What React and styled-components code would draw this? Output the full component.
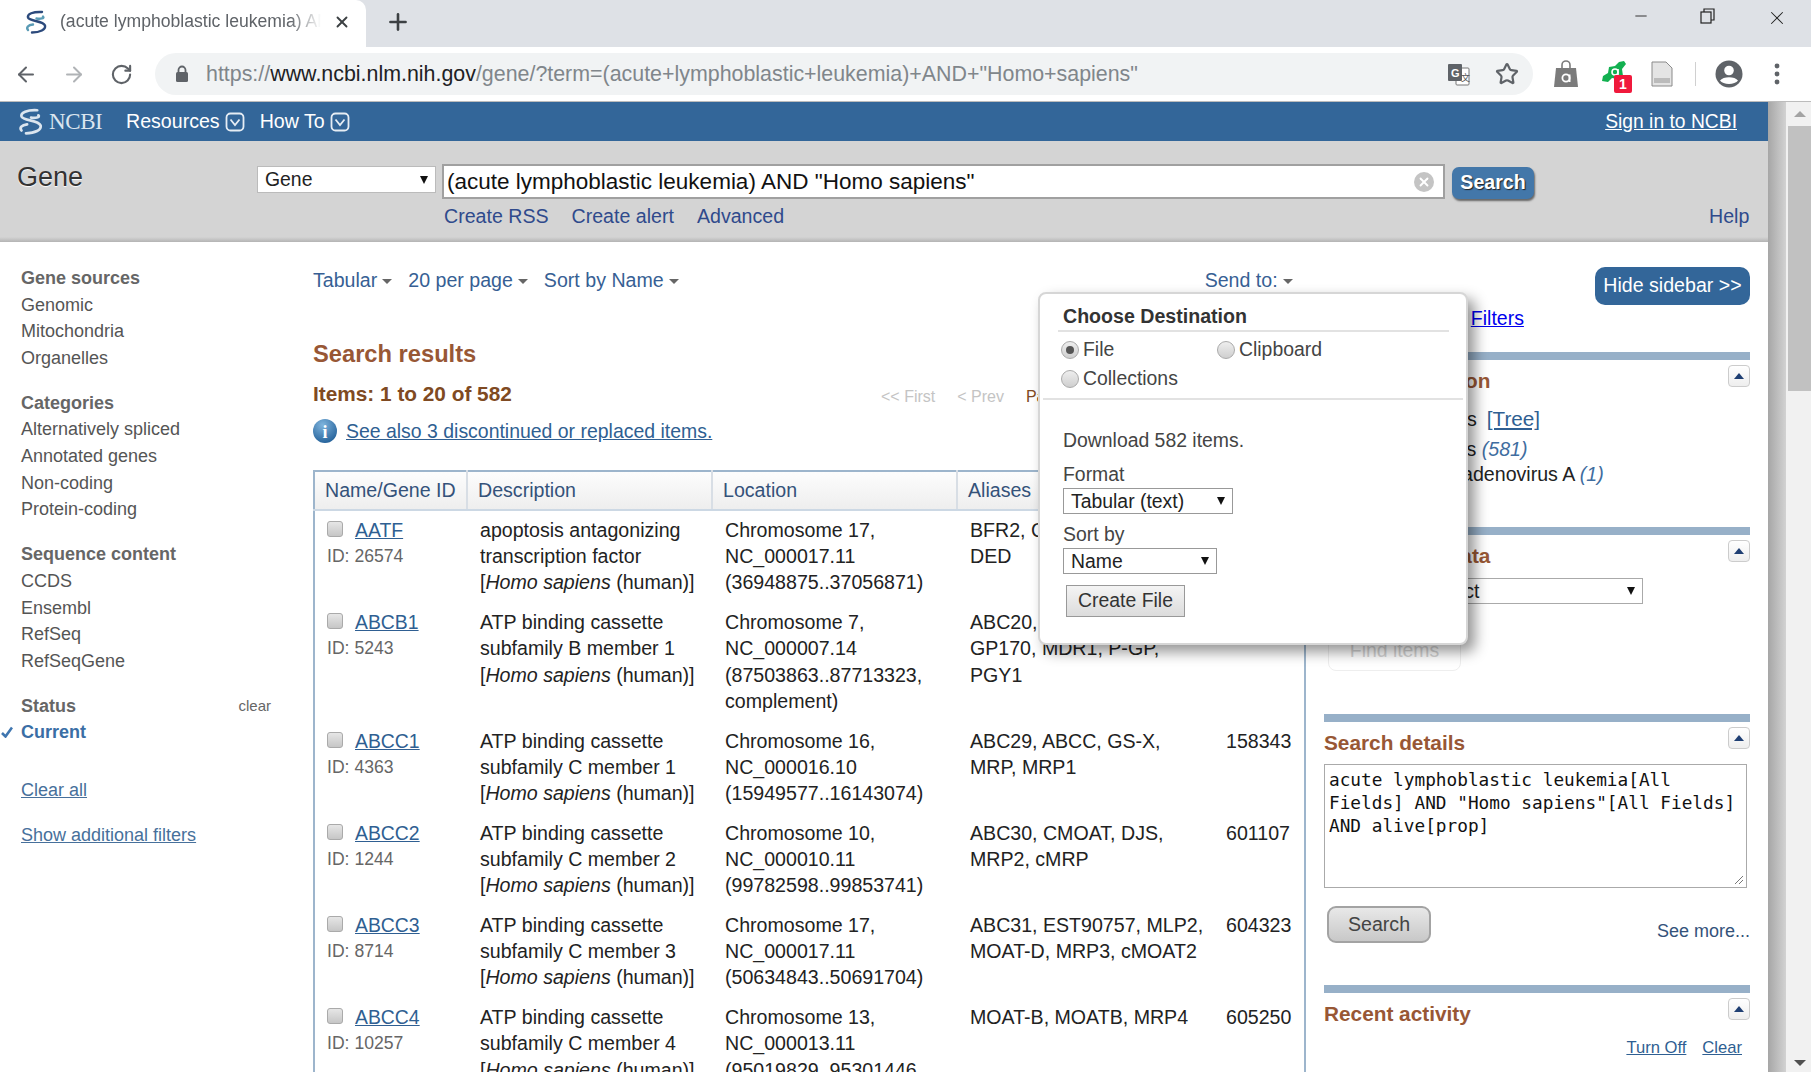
import React from 'react'
import styled, { createGlobalStyle } from 'styled-components'
import { ArrowLeft, ArrowRight, RotateCw, Star, Plus, X, Minus } from 'lucide-react'

const GlobalStyle = createGlobalStyle`
  html, body { margin: 0; padding: 0; height: 100%; overflow: hidden; }
  body { font-family: "Liberation Sans", Arial, sans-serif; color: #333; }
  a { color: inherit; }
`

const Root = styled.div`
  display: flex;
  flex-direction: column;
  width: 1811px;
  height: 1072px;
  overflow: hidden;
  background: #fff;
`

/* browser chrome */
const TabStrip = styled.div`
  display: flex;
  align-items: stretch;
  height: 47px;
  background: #dee1e6;
  flex: none;
`
const Tab = styled.div`
  display: flex;
  align-items: center;
  width: 366px;
  padding: 0 15px 4px 24px;
  box-sizing: border-box;
  background: #fff;
  border-radius: 0 10px 0 0;
  gap: 12px;
`
const TabTitle = styled.div`
  flex: 1;
  font-size: 17.6px;
  color: #5f6368;
  white-space: nowrap;
  overflow: hidden;
  -webkit-mask-image: linear-gradient(90deg, #000 88%, transparent);
  mask-image: linear-gradient(90deg, #000 88%, transparent);
`
const NewTab = styled.div`
  display: flex;
  align-items: center;
  margin-left: 19px;
  padding-bottom: 4px;
  color: #3c4043;
`
const WindowControls = styled.div`
  display: flex;
  align-items: flex-start;
  margin-left: auto;
  padding: 7px 23px 0 0;
  gap: 49px;
  color: #222;
`
const Toolbar = styled.div`
  display: flex;
  align-items: center;
  height: 55px;
  flex: none;
  box-sizing: border-box;
  border-bottom: 1px solid #bcbcbc;
  padding-left: 14px;
  background: #fff;
`
const NavButton = styled.div`
  display: flex;
  width: 24px;
  margin-right: 24px;
  color: ${(props) => props.color || '#5f6368'};
`
const Omnibox = styled.div`
  display: flex;
  align-items: center;
  width: 1378px;
  height: 42px;
  margin-left: -3px;
  box-sizing: border-box;
  padding: 0 14px 0 20px;
  border-radius: 21px;
  background: #f1f3f4;
`
const UrlText = styled.div`
  margin-left: 17px;
  padding-top: 1px;
  font-size: 21.4px;
  color: #80868b;
  white-space: nowrap;
  b { font-weight: normal; color: #202124; }
`
const OmniIcons = styled.div`
  display: flex;
  align-items: center;
  margin-left: auto;
  gap: 24px;
  color: #5f6368;
`
const ExtIcons = styled.div`
  display: flex;
  align-items: center;
  margin-left: 9px;
  color: #5f6368;
`
const ExtSlot = styled.div`
  position: relative;
  display: flex;
  justify-content: center;
  width: 48px;
`
const ExtBadge = styled.span`
  position: absolute;
  left: 24px;
  top: 15px;
  width: 18px;
  height: 18px;
  border-radius: 2px;
  background: #f0193c;
  color: #fff;
  font-size: 14px;
  font-weight: bold;
  line-height: 18px;
  text-align: center;
`
const ToolSep = styled.div`
  width: 1px;
  height: 24px;
  margin: 0 9px;
  background: #d0d0d0;
`

/* viewport */
const Viewport = styled.div`
  flex: 1;
  display: flex;
  min-height: 0;
`
const PageFrame = styled.div`
  position: relative;
  width: 1768px;
  flex: none;
  overflow: hidden;
`
const FrameShadow = styled.div`
  width: 18px;
  flex: none;
  background: linear-gradient(90deg, #a6a6a6, #d2d2d2);
`
const Scrollbar = styled.div`
  flex: 1;
  display: flex;
  flex-direction: column;
  align-items: center;
  background: #f1f1f1;
  padding-left: 2px;
`
const ScrollThumb = styled.div`
  width: 100%;
  height: 265px;
  background: #c1c1c1;
`
const ScrollArrow = styled.div`
  width: 0;
  height: 0;
  margin: ${(props) => (props.down ? 'auto 0 6px' : '9px 0')};
  border-left: 6px solid transparent;
  border-right: 6px solid transparent;
  ${(props) => (props.down ? 'border-top: 6px solid #505050;' : 'border-bottom: 6px solid #a3a3a3;')}
`

/* NCBI header */
const NcbiBar = styled.div`
  display: flex;
  align-items: center;
  height: 39px;
  background: #336699;
  padding: 0 31px 0 17px;
  color: #fff;
`
const NcbiLogo = styled.div`
  display: flex;
  align-items: center;
  gap: 5px;
  width: 109px;
  font-family: "Liberation Serif", serif;
  font-size: 23px;
  letter-spacing: -0.4px;
  color: #dbe5ef;
`
const NavItem = styled.div`
  display: flex;
  align-items: center;
  gap: 5px;
  margin-right: 15px;
  font-size: 19.6px;
`
const NavChevron = styled.svg`
  width: 20px;
  height: 20px;
`
const SignIn = styled.a`
  margin-left: auto;
  font-size: 19.3px;
  text-decoration: underline;
  color: #fff;
`
const SearchBand = styled.div`
  display: grid;
  grid-template-columns: 257px 179px 1100px 1fr;
  grid-template-rows: 58px 1fr;
  height: 101px;
  box-sizing: border-box;
  background: linear-gradient(180deg, #d4d4d4 95%, #b4b4b4);
`
const DbTitle = styled.div`
  padding: 21px 0 0 17px;
  font-size: 27px;
  color: #333;
  text-shadow: 0 1px 1px #fff;
`
const FakeSelect = styled.div`
  display: flex;
  align-items: center;
  justify-content: space-between;
  box-sizing: border-box;
  width: ${(props) => props.w}px;
  height: ${(props) => props.h || 26}px;
  margin-top: ${(props) => props.mt || 0}px;
  padding: 0 7px;
  background: #fff;
  border: 1px solid ${(props) => props.bd || '#a9a9a9'};
  font-size: 19.4px;
  color: #222;
`
const SelectArrow = styled.span`
  width: 0;
  height: 0;
  border-left: 4px solid transparent;
  border-right: 4px solid transparent;
  border-top: 8px solid #111;
`
const DbSelectCell = styled.div`
  padding-top: 25px;
`
const TermCell = styled.div`
  display: flex;
  align-items: flex-start;
  padding: 23px 0 0 6px;
  gap: 7px;
`
const TermInput = styled.div`
  display: flex;
  align-items: center;
  justify-content: space-between;
  box-sizing: border-box;
  width: 1003px;
  height: 35px;
  padding: 0 9px 0 3px;
  background: #fff;
  border: 2px solid #a0a0a0;
  font-size: 22.5px;
  color: #111;
`
const ClearDot = styled.span`
  display: flex;
  align-items: center;
  justify-content: center;
  width: 20px;
  height: 20px;
  border-radius: 50%;
  background: #c4c4c4;
  color: #fff;
`
const GoButton = styled.div`
  width: 82px;
  height: 32px;
  margin-top: 3px;
  border-radius: 7px;
  background: #4377a9;
  box-shadow: 1px 2px 2px #666;
  color: #fff;
  font-size: 19.6px;
  font-weight: bold;
  line-height: 31px;
  text-align: center;
  text-shadow: 1px 1px 1px #222;
`
const BandLinks = styled.div`
  grid-column: 3;
  display: flex;
  gap: 23px;
  padding: 6px 0 0 8px;
  font-size: 19.6px;
  color: #2f4a8c;
`
const HelpLink = styled.div`
  grid-column: 4;
  padding: 6px 0 0 173px;
  font-size: 19.6px;
  color: #2f4a8c;
`

/* page body */
const Columns = styled.div`
  display: flex;
  align-items: flex-start;
  height: 830px;
`
const Facets = styled.div`
  width: 313px;
  flex: none;
  box-sizing: border-box;
  padding: 23px 0 0 21px;
  font-size: 18px;
  line-height: 26.6px;
  color: #555;
`
const FacetGroup = styled.div`
  margin-bottom: ${(props) => props.mb || 18.5}px;
`
const FacetHead = styled.div`
  display: flex;
  justify-content: space-between;
  width: 250px;
  font-weight: bold;
  font-size: 18px;
  color: #666;
  small { font-weight: normal; font-size: 15px; color: #666; }
`
const FacetItem = styled.div`
  position: relative;
  color: ${(props) => (props.active ? '#3a6ea5' : '#555')};
  font-weight: ${(props) => (props.active ? 'bold' : 'normal')};
`
const FacetCheck = styled.svg`
  position: absolute;
  left: -20px;
  top: 7px;
`
const FacetLink = styled.a`
  display: block;
  margin-bottom: ${(props) => props.mb || 0}px;
  text-decoration: underline;
  color: #47709b;
`
const Results = styled.div`
  width: 993px;
  flex: none;
`
const ViewBar = styled.div`
  display: flex;
  align-items: center;
  gap: 16px;
  height: 32px;
  margin-top: 22px;
  font-size: 19.6px;
  color: #375f94;
`
const Drop = styled.span`
  display: inline-flex;
  align-items: center;
  gap: 5px;
  margin-left: ${(props) => props.ml || 0}px;
  &::after {
    content: '';
    margin-top: 3px;
    border-left: 5px solid transparent;
    border-right: 5px solid transparent;
    border-top: 5px solid #666;
  }
`
const ResultsTitle = styled.h2`
  margin: 43px 0 0;
  font-size: 23.7px;
  line-height: 30px;
  color: #985735;
`
const ItemsRow = styled.div`
  display: flex;
  align-items: center;
  height: 30px;
  margin-top: 10px;
`
const ItemsCount = styled.div`
  width: 568px;
  font-size: 20.8px;
  font-weight: bold;
  color: #7f4a22;
`
const Pager = styled.div`
  display: flex;
  gap: 22px;
  margin-top: 6px;
  font-size: 16px;
  color: #c4c4c4;
  span:last-child { color: #7f4a22; }
`
const NoticeRow = styled.div`
  display: flex;
  align-items: center;
  gap: 9px;
  height: 28px;
  margin-top: 8px;
  font-size: 19.45px;
  color: #2f5f92;
  a { text-decoration: underline; }
`
const ResultTable = styled.table`
  width: 993px;
  margin-top: 25px;
  table-layout: fixed;
  border-collapse: collapse;
  border: 2px solid #9db5cc;
  border-bottom: 0;
  font-size: 19.6px;
  line-height: 26.2px;
  color: #222;
  th {
    height: 37px;
    padding: 0 0 0 10px;
    text-align: left;
    font-weight: normal;
    color: #34527a;
    background: linear-gradient(180deg, #fdfdfd, #eeeeee);
    border-right: 2px solid #d8dee5;
    border-bottom: 2px solid #ccd8e4;
    white-space: nowrap;
  }
  td {
    padding: 6px 0 7.6px 13px;
    vertical-align: top;
    white-space: nowrap;
  }
  td:first-child { padding-left: 12px; }
`
const NameCell = styled.div`
  display: flex;
  align-items: center;
  gap: 12px;
  font-size: 19.4px;
  a { color: #2f5f92; text-decoration: underline; }
`
const RowCheck = styled.span`
  width: 16px;
  height: 16px;
  box-sizing: border-box;
  border: 1px solid #aaa;
  border-radius: 3px;
  margin-top: -2px;
  background: linear-gradient(180deg, #e6e6e6, #c6c6c6);
`
const GeneId = styled.div`
  font-size: 17.6px;
  color: #666;
`
const Sidebar = styled.div`
  width: 426px;
  flex: none;
  margin-left: 18px;
`
const HideRow = styled.div`
  display: flex;
  justify-content: flex-end;
  padding-top: 25px;
`
const HideButton = styled.div`
  width: 155px;
  height: 38px;
  border-radius: 10px;
  background: #336699;
  color: #fff;
  font-size: 19.6px;
  line-height: 37px;
  text-align: center;
`
const FiltersRow = styled.div`
  height: 47px;
  padding: 0 0 0 7px;
  font-size: 19.5px;
  line-height: 26px;
  margin-top: 0;
  a { color: #0000ee; text-decoration: underline; }
`
const Section = styled.section`
  position: relative;
  height: ${(props) => props.h}px;
  box-sizing: border-box;
  border-top: 8px solid #97b0c8;
  padding-top: 8px;
`
const SectionTitle = styled.h3`
  margin: 0;
  font-size: 20.8px;
  line-height: 26px;
  color: #985735;
`
const ToggleButton = styled.span`
  position: absolute;
  right: 0;
  top: 5px;
  display: flex;
  align-items: center;
  justify-content: center;
  width: 22px;
  height: 22px;
  box-sizing: border-box;
  border: 1px solid #ccc;
  border-radius: 4px;
  background: linear-gradient(180deg, #fff, #eee);
  &::after {
    content: '';
    border-left: 5px solid transparent;
    border-right: 5px solid transparent;
    border-bottom: 6px solid #1f3f73;
  }
`
const TaxonList = styled.div`
  margin: 12px 0 0 27px;
  font-size: 19.6px;
  line-height: 25px;
  color: #222;
  a { font-size: 20.7px; color: #2f5f92; text-decoration: underline; margin-left: 10px; }
  i { color: #3f6da0; }
`
const TaxonRow = styled.div`
  margin-left: ${(props) => props.ml || 0}px;
  margin-bottom: ${(props) => props.mb || 0}px;
`
const DbRow = styled.div`
  display: flex;
  align-items: center;
  gap: 5px;
  margin-top: 9px;
  font-size: 19.4px;
`
const FindItems = styled.div`
  width: 131px;
  height: 38px;
  margin: 27px 0 0 4px;
  border: 1px solid #eee;
  border-radius: 8px;
  color: #d4d4d4;
  font-size: 19.4px;
  line-height: 36px;
  text-align: center;
`
const DetailsBox = styled.div`
  position: relative;
  width: 423px;
  height: 124px;
  margin-top: 8px;
  box-sizing: border-box;
  border: 1px solid #aaa;
  padding: 4px 4px;
  font-family: "DejaVu Sans Mono", monospace;
  font-size: 17.75px;
  line-height: 23px;
  color: #111;
  white-space: pre;
`
const ResizeGrip = styled.svg`
  position: absolute;
  right: 2px;
  bottom: 2px;
`
const DetailsFoot = styled.div`
  display: flex;
  justify-content: space-between;
  margin-top: 18px;
  padding-left: 3px;
`
const GrayButton = styled.div`
  width: 104px;
  height: 37px;
  box-sizing: border-box;
  border: 2px solid #a3a3a3;
  border-radius: 9px;
  background: linear-gradient(180deg, #e8e8e8, #c8c8c8);
  color: #444;
  font-size: 19.6px;
  line-height: 32px;
  text-align: center;
`
const SeeMore = styled.div`
  padding-top: 15px;
  font-size: 18px;
  color: #34527a;
`
const RecentLinks = styled.div`
  display: flex;
  justify-content: flex-end;
  gap: 16px;
  margin-top: 11px;
  padding-right: 8px;
  font-size: 16.6px;
  color: #2f5f92;
  a { text-decoration: underline; }
`

/* send to popup */
const Popup = styled.div`
  position: absolute;
  left: 1038px;
  top: 190px;
  width: 430px;
  height: 353px;
  box-sizing: border-box;
  padding: 10px 20px 0 23px;
  background: #fff;
  border: 2px solid #d6d6d6;
  border-radius: 8px;
  box-shadow: 7px 7px 14px rgba(0, 0, 0, 0.42);
  font-size: 19.4px;
  color: #444;
`
const PopupTitle = styled.div`
  margin: 0 -3px 0 -5px;
  border-bottom: 2px solid #e2e2e2;
  height: 26px;
  padding-left: 5px;
  font-weight: bold;
  font-size: 19.6px;
  line-height: 24px;
  color: #333;
`
const RadioGrid = styled.div`
  display: grid;
  grid-template-columns: 156px 1fr;
  grid-auto-rows: 29px;
  align-items: center;
  margin: 3px 0 0 -2px;
`
const RadioLabel = styled.label`
  display: flex;
  align-items: center;
  gap: 4px;
`
const RadioDot = styled.span`
  display: flex;
  align-items: center;
  justify-content: center;
  width: 18px;
  height: 18px;
  box-sizing: border-box;
  border: 1px solid #aaa;
  border-radius: 50%;
  background: linear-gradient(180deg, #eee, #cfcfcf);
  &::after {
    content: '';
    display: ${(props) => (props.on ? 'block' : 'none')};
    width: 8px;
    height: 8px;
    border-radius: 50%;
    background: #555;
  }
`
const PopupRule = styled.div`
  height: 2px;
  margin: 5px -17px 0 -20px;
  background: #e2e2e2;
`
const PopupText = styled.div`
  margin-top: ${(props) => props.mt || 0}px;
  line-height: 26px;
`
const CreateButton = styled.div`
  width: 119px;
  height: 32px;
  margin: 11px 0 0 3px;
  box-sizing: border-box;
  border: 1px solid #999;
  background: linear-gradient(180deg, #f4f4f4, #dcdcdc);
  color: #333;
  font-size: 19.4px;
  line-height: 29px;
  text-align: center;
`

const Helix = ({ size = 24, color = '#dbe5ef', accent = '#dbe5ef' }) => (
  <svg width={size} height={size} viewBox="0 0 24 24" fill="none" strokeLinecap="round" strokeWidth="2.4">
    <path d="M18 2 C9 1.5 3 4 4 7.5 C5.5 11.5 19 10.5 21 15.5 C22 19.5 16 22.5 8 22.5" stroke={color} />
    <path d="M19 6.5 C21 8.5 16 9 12.5 8.5" stroke={accent} />
    <path d="M9 14.5 C4 15 2 17.5 4 20" stroke={accent} />
  </svg>
)

const MenuChevron = () => (
  <NavChevron viewBox="0 0 20 20" fill="none" stroke="#e6edf4" strokeWidth="1.8">
    <rect x="1.5" y="1.5" width="17" height="17" rx="4" />
    <path d="M5.5 7.5 L10 13 L14.5 7.5" />
  </NavChevron>
)

const genes = [
  { name: 'AATF', id: '26574', desc: ['apoptosis antagonizing', 'transcription factor'], loc: ['Chromosome 17,', 'NC_000017.11', '(36948875..37056871)'], alias: ['BFR2, CHE1, DED,', 'DED'], mim: '608463' },
  { name: 'ABCB1', id: '5243', desc: ['ATP binding cassette', 'subfamily B member 1'], loc: ['Chromosome 7,', 'NC_000007.14', '(87503863..87713323,', 'complement)'], alias: ['ABC20, CD243, CLCS,', 'GP170, MDR1, P-GP,', 'PGY1'], mim: '171050' },
  { name: 'ABCC1', id: '4363', desc: ['ATP binding cassette', 'subfamily C member 1'], loc: ['Chromosome 16,', 'NC_000016.10', '(15949577..16143074)'], alias: ['ABC29, ABCC, GS-X,', 'MRP, MRP1'], mim: '158343' },
  { name: 'ABCC2', id: '1244', desc: ['ATP binding cassette', 'subfamily C member 2'], loc: ['Chromosome 10,', 'NC_000010.11', '(99782598..99853741)'], alias: ['ABC30, CMOAT, DJS,', 'MRP2, cMRP'], mim: '601107' },
  { name: 'ABCC3', id: '8714', desc: ['ATP binding cassette', 'subfamily C member 3'], loc: ['Chromosome 17,', 'NC_000017.11', '(50634843..50691704)'], alias: ['ABC31, EST90757, MLP2,', 'MOAT-D, MRP3, cMOAT2'], mim: '604323' },
  { name: 'ABCC4', id: '10257', desc: ['ATP binding cassette', 'subfamily C member 4'], loc: ['Chromosome 13,', 'NC_000013.11', '(95019829..95301446,', 'complement)'], alias: ['MOAT-B, MOATB, MRP4'], mim: '605250' },
]

const facets = [
  { head: 'Gene sources', items: ['Genomic', 'Mitochondria', 'Organelles'] },
  { head: 'Categories', items: ['Alternatively spliced', 'Annotated genes', 'Non-coding', 'Protein-coding'] },
  { head: 'Sequence content', items: ['CCDS', 'Ensembl', 'RefSeq', 'RefSeqGene'] },
]

const Lines = ({ items }) => items.map((line) => <div key={line}>{line}</div>)

const App = () => (
  <Root>
    <GlobalStyle />
    <TabStrip>
      <Tab>
        <Helix size={24} color="#2c4a7c" accent="#5a9bb5" />
        <TabTitle>(acute lymphoblastic leukemia) AND "Homo sapiens"</TabTitle>
        <X size={18} color="#3c4043" strokeWidth={2.5} />
      </Tab>
      <NewTab><Plus size={26} strokeWidth={2.4} /></NewTab>
      <WindowControls>
        <Minus size={18} strokeWidth={1.2} />
        <svg width="18" height="18" viewBox="0 0 18 18" fill="none" stroke="#222" strokeWidth="1.2">
          <rect x="2" y="5" width="10" height="11" />
          <path d="M5 5 V2 H15 V13 H12" />
        </svg>
        <X size={22} strokeWidth={1.1} />
      </WindowControls>
    </TabStrip>
    <Toolbar>
      <NavButton><ArrowLeft size={25} strokeWidth={2} /></NavButton>
      <NavButton color="#b0b3b6"><ArrowRight size={25} strokeWidth={2} /></NavButton>
      <NavButton><RotateCw size={23} strokeWidth={2.2} /></NavButton>
      <Omnibox>
        <svg width="14" height="18" viewBox="0 0 14 18" fill="#5f6368">
          <rect x="1" y="7" width="12" height="10" rx="1.5" />
          <path d="M3.5 7 V5 a3.5 3.5 0 0 1 7 0 V7" fill="none" stroke="#5f6368" strokeWidth="1.8" />
        </svg>
        <UrlText>https://<b>www.ncbi.nlm.nih.gov</b>/gene/?term=(acute+lymphoblastic+leukemia)+AND+"Homo+sapiens"</UrlText>
        <OmniIcons>
          <svg width="24" height="24" viewBox="0 0 24 24">
            <rect x="9" y="6" width="13" height="17" rx="1" fill="#fff" stroke="#777" />
            <rect x="1" y="2" width="14" height="17" rx="1" fill="#5f6368" />
            <text x="4" y="15" fontSize="11" fontWeight="bold" fill="#fff" fontFamily="Liberation Sans">G</text>
            <text x="14" y="19" fontSize="9" fill="#555" fontFamily="Noto Sans CJK SC">文</text>
          </svg>
          <Star size={24} strokeWidth={2.2} />
        </OmniIcons>
      </Omnibox>
      <ExtIcons>
        <ExtSlot>
          <svg width="26" height="28" viewBox="0 0 26 28" fill="#7b7b7b">
            <path d="M3 8 H23 L25 27 H1 Z" />
            <path d="M9 8 V5 a4 4 0 0 1 8 0 V8" fill="none" stroke="#7b7b7b" strokeWidth="1.6" />
            <circle cx="13" cy="18" r="3.6" fill="none" stroke="#fff" strokeWidth="1.8" />
            <path d="M16.6 14.5 V22" stroke="#fff" strokeWidth="1.8" />
          </svg>
        </ExtSlot>
        <ExtSlot>
          <svg width="26" height="28" viewBox="0 0 26 28" fill="#12b050">
            <path d="M18 2 L23 1 L25 4 L21 9 L22 16 L17 19 L11 18 L7 22 L1 21 L2 16 L7 13 L8 7 L14 6 Z" />
            <circle cx="14" cy="12" r="3" fill="none" stroke="#fff" strokeWidth="1.6" />
            <path d="M17 9 V15.5" stroke="#fff" strokeWidth="1.6" />
          </svg>
          <ExtBadge>1</ExtBadge>
        </ExtSlot>
        <ExtSlot>
          <svg width="22" height="26" viewBox="0 0 22 26">
            <path d="M1 1 H15 L21 7 V25 H1 Z" fill="#e4e4e4" stroke="#8a8a8a" />
            <rect x="3" y="17" width="16" height="5" fill="#bbb" />
          </svg>
        </ExtSlot>
        <ToolSep />
        <ExtSlot>
          <svg width="28" height="28" viewBox="0 0 28 28">
            <circle cx="14" cy="14" r="13.5" fill="#5f6368" />
            <circle cx="14" cy="10.5" r="4.8" fill="#fff" />
            <path d="M5 20.5 C8 16 20 16 23 20.5 C20 25 8 25 5 20.5 Z" fill="#fff" />
          </svg>
        </ExtSlot>
        <ExtSlot>
          <svg width="6" height="22" viewBox="0 0 6 22" fill="#5f6368">
            <circle cx="3" cy="3" r="2.4" />
            <circle cx="3" cy="11" r="2.4" />
            <circle cx="3" cy="19" r="2.4" />
          </svg>
        </ExtSlot>
      </ExtIcons>
    </Toolbar>
    <Viewport>
      <PageFrame>
        <NcbiBar>
          <NcbiLogo><Helix size={27} />NCBI</NcbiLogo>
          <NavItem>Resources <MenuChevron /></NavItem>
          <NavItem>How To <MenuChevron /></NavItem>
          <SignIn>Sign in to NCBI</SignIn>
        </NcbiBar>
        <SearchBand>
          <DbTitle>Gene</DbTitle>
          <DbSelectCell>
            <FakeSelect w={179} h={27} bd="#bbb">Gene<SelectArrow /></FakeSelect>
          </DbSelectCell>
          <TermCell>
            <TermInput>
              (acute lymphoblastic leukemia) AND "Homo sapiens"
              <ClearDot><X size={14} strokeWidth={3.2} /></ClearDot>
            </TermInput>
            <GoButton>Search</GoButton>
          </TermCell>
          <div />
          <BandLinks>
            <span>Create RSS</span>
            <span>Create alert</span>
            <span>Advanced</span>
          </BandLinks>
          <HelpLink>Help</HelpLink>
        </SearchBand>
        <Columns>
          <Facets>
            {facets.map((group) => (
              <FacetGroup key={group.head}>
                <FacetHead>{group.head}</FacetHead>
                {group.items.map((item) => <FacetItem key={item}>{item}</FacetItem>)}
              </FacetGroup>
            ))}
            <FacetGroup mb={31}>
              <FacetHead>Status <small>clear</small></FacetHead>
              <FacetItem active>
                <FacetCheck width="12" height="12" viewBox="0 0 12 12" fill="none" stroke="#3f76b0" strokeWidth="2.6">
                  <path d="M1 7 L4.5 10.5 L11 1.5" />
                </FacetCheck>
                Current
              </FacetItem>
            </FacetGroup>
            <FacetLink mb={18}>Clear all</FacetLink>
            <FacetLink>Show additional filters</FacetLink>
          </Facets>
          <Results>
            <ViewBar>
              <Drop>Tabular</Drop>
              <Drop>20 per page</Drop>
              <Drop>Sort by Name</Drop>
              <Drop ml={510}>Send to:</Drop>
            </ViewBar>
            <ResultsTitle>Search results</ResultsTitle>
            <ItemsRow>
              <ItemsCount>Items: 1 to 20 of 582</ItemsCount>
              <Pager><span>&lt;&lt; First</span><span>&lt; Prev</span><span>Page</span></Pager>
            </ItemsRow>
            <NoticeRow>
              <svg width="24" height="24" viewBox="0 0 24 24">
                <defs>
                  <radialGradient id="infoGlow" cx="40%" cy="25%" r="85%">
                    <stop offset="0%" stopColor="#7fb4dd" />
                    <stop offset="100%" stopColor="#1c5a94" />
                  </radialGradient>
                </defs>
                <circle cx="12" cy="12" r="12" fill="url(#infoGlow)" />
                <text x="9.5" y="19" fontSize="18" fontWeight="bold" fill="#fff" fontFamily="Liberation Serif">i</text>
              </svg>
              <a>See also 3 discontinued or replaced items.</a>
            </NoticeRow>
            <ResultTable>
              <colgroup>
                <col width="153" />
                <col width="245" />
                <col width="245" />
                <col width="256" />
                <col />
              </colgroup>
              <thead>
                <tr>
                  <th>Name/Gene ID</th>
                  <th>Description</th>
                  <th>Location</th>
                  <th>Aliases</th>
                  <th>MIM</th>
                </tr>
              </thead>
              <tbody>
                {genes.map((gene) => (
                  <tr key={gene.name}>
                    <td>
                      <NameCell><RowCheck /><a>{gene.name}</a></NameCell>
                      <GeneId>ID: {gene.id}</GeneId>
                    </td>
                    <td>
                      <Lines items={gene.desc} />
                      <div>[<i>Homo sapiens</i> (human)]</div>
                    </td>
                    <td><Lines items={gene.loc} /></td>
                    <td><Lines items={gene.alias} /></td>
                    <td>{gene.mim}</td>
                  </tr>
                ))}
              </tbody>
            </ResultTable>
          </Results>
          <Sidebar>
            <HideRow><HideButton>Hide sidebar &gt;&gt;</HideButton></HideRow>
            <FiltersRow>Filters: Manage <a>Filters</a></FiltersRow>
            <Section h={175}>
              <ToggleButton />
              <SectionTitle>Results by taxon</SectionTitle>
              <TaxonList>
                <TaxonRow ml={-6} mb={5}>Top Organisms<a>[Tree]</a></TaxonRow>
                <TaxonRow>Homo sapiens <i>(581)</i></TaxonRow>
                <TaxonRow>Human mastadenovirus A <i>(1)</i></TaxonRow>
              </TaxonList>
            </Section>
            <Section h={187}>
              <ToggleButton />
              <SectionTitle>Find related data</SectionTitle>
              <DbRow>
                Database:
                <FakeSelect w={226} bd="#aaa">Select<SelectArrow /></FakeSelect>
              </DbRow>
              <FindItems>Find items</FindItems>
            </Section>
            <Section h={271}>
              <ToggleButton />
              <SectionTitle>Search details</SectionTitle>
              <DetailsBox>
                {'acute lymphoblastic leukemia[All\nFields] AND "Homo sapiens"[All Fields]\nAND alive[prop]'}
                <ResizeGrip width="10" height="10" viewBox="0 0 10 10" stroke="#777">
                  <path d="M1 9 L9 1 M5 9 L9 5" />
                </ResizeGrip>
              </DetailsBox>
              <DetailsFoot>
                <GrayButton>Search</GrayButton>
                <SeeMore>See more...</SeeMore>
              </DetailsFoot>
            </Section>
            <Section h={90}>
              <ToggleButton />
              <SectionTitle>Recent activity</SectionTitle>
              <RecentLinks><a>Turn Off</a><a>Clear</a></RecentLinks>
            </Section>
          </Sidebar>
        </Columns>
        <Popup>
          <PopupTitle>Choose Destination</PopupTitle>
          <RadioGrid>
            <RadioLabel><RadioDot on />File</RadioLabel>
            <RadioLabel><RadioDot />Clipboard</RadioLabel>
            <RadioLabel><RadioDot />Collections</RadioLabel>
          </RadioGrid>
          <PopupRule />
          <PopupText mt={27}>Download 582 items.</PopupText>
          <PopupText mt={8}>Format</PopupText>
          <FakeSelect w={170} mt={1} bd="#999">Tabular (text)<SelectArrow /></FakeSelect>
          <PopupText mt={7}>Sort by</PopupText>
          <FakeSelect w={154} mt={1} bd="#999">Name<SelectArrow /></FakeSelect>
          <CreateButton>Create File</CreateButton>
        </Popup>
      </PageFrame>
      <FrameShadow />
      <Scrollbar>
        <ScrollArrow />
        <ScrollThumb />
        <ScrollArrow down />
      </Scrollbar>
    </Viewport>
  </Root>
)

export default App
